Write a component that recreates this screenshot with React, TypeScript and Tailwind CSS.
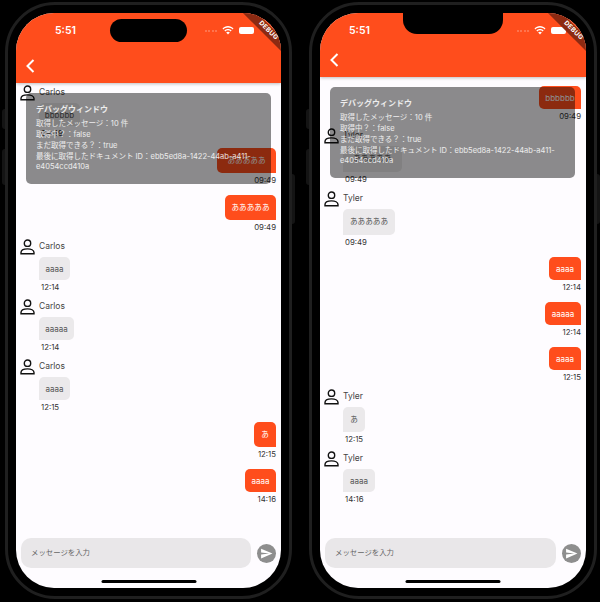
const fontCls = "font-['Inter','Noto_Sans_CJK_JP',sans-serif]"

type Msg = { side: 'me' | 'them'; text: string; time: string; w: string; h?: string; name?: string }

const leftMsgs: Msg[] = [
  { side: 'them', name: 'Carlos', text: 'bbbbbb', time: '09:49', w: 'w-[41px]' },
  { side: 'me', text: 'あああああ', time: '09:49', w: 'w-[59px]', h: 'h-[25px]' },
  { side: 'me', text: 'あああああ', time: '09:49', w: 'w-[51px]', h: 'h-[25px]' },
  { side: 'them', name: 'Carlos', text: 'aaaa', time: '12:14', w: 'w-[31px]' },
  { side: 'them', name: 'Carlos', text: 'aaaaa', time: '12:14', w: 'w-[35px]' },
  { side: 'them', name: 'Carlos', text: 'aaaa', time: '12:15', w: 'w-[31px]' },
  { side: 'me', text: 'あ', time: '12:15', w: 'w-[22px]', h: 'h-[25px]' },
  { side: 'me', text: 'aaaa', time: '14:16', w: 'w-[31px]' },
]

const rightMsgs: Msg[] = [
  { side: 'me', text: 'bbbbbb', time: '09:49', w: 'w-[42px]' },
  { side: 'them', name: 'Tyler', text: 'あああああ', time: '09:49', w: 'w-[59px]', h: 'h-[26px]' },
  { side: 'them', name: 'Tyler', text: 'あああああ', time: '09:49', w: 'w-[52px]', h: 'h-[26px]' },
  { side: 'me', text: 'aaaa', time: '12:14', w: 'w-[32px]' },
  { side: 'me', text: 'aaaaa', time: '12:14', w: 'w-[36px]' },
  { side: 'me', text: 'aaaa', time: '12:15', w: 'w-[32px]' },
  { side: 'them', name: 'Tyler', text: 'あ', time: '12:15', w: 'w-[22px]', h: 'h-[25px]' },
  { side: 'them', name: 'Tyler', text: 'aaaa', time: '14:16', w: 'w-[32px]' },
]

const PersonIcon = () => (
  <svg width="15" height="16" viewBox="0 0 15 16" fill="none" stroke="#111" strokeWidth="1.4" className="shrink-0">
    <circle cx="7.5" cy="4.2" r="3.2" />
    <path d="M1 14.8v-1.3c0-2.2 2.900-3.600 6.500-3.600s6.500 1.400 6.500 3.600v1.300z" />
  </svg>
)

// japanese text sits a little smaller than latin in the bubbles
const bubbleText = (text: string) => (/[a-z]/.test(text) ? 'text-[8px]' : 'text-[7.6px]')

const Bubble = ({ msg }: { msg: Msg }) => {
  if (msg.side === 'me') {
    return (
      <div className="mt-2 flex flex-col items-end first:mt-[9px]">
        <div className={`${msg.w} ${msg.h ?? 'h-[23px]'} ${bubbleText(msg.text)} flex items-center justify-center rounded-t-[5px] rounded-bl-[5px] bg-[#ff4d1c] text-white`}>
          {msg.text}
        </div>
        <div className="h-[14px] text-[7.8px] leading-[14px] text-[#333]">{msg.time}</div>
      </div>
    )
  }
  return (
    <div className="mt-[5px] flex flex-col first:mt-[2px]">
      <div className="flex h-[18px] items-start gap-[4px]">
        <PersonIcon />
        <span className="mt-[2px] text-[8.5px] leading-[11px] text-[#444]">{msg.name}</span>
      </div>
      <div className={`ml-[19px] ${msg.w} ${msg.h ?? 'h-[23px]'} ${bubbleText(msg.text)} flex items-center justify-center rounded-t-[5px] rounded-br-[5px] bg-[#ebe9eb] text-[#555]`}>
        {msg.text}
      </div>
      <div className="ml-[21px] h-[14px] text-[7.8px] leading-[14px] text-[#333]">{msg.time}</div>
    </div>
  )
}

const StatusRight = () => (
  <div className="flex items-center gap-[5px]">
    <div className="flex gap-[1.5px]">
      <span className="size-[2px] rounded-full bg-white/30" />
      <span className="size-[2px] rounded-full bg-white/30" />
      <span className="size-[2px] rounded-full bg-white/30" />
      <span className="size-[2px] rounded-full bg-white/30" />
    </div>
    <svg width="12" height="9" viewBox="0 0 12 9" fill="white">
      <path d="M6 1.600c1.800 0 3.400.7 4.600 1.800l.9-1C10.100.9 8.100 0 6 0S1.900.9.500 2.400l.9 1C2.600 2.300 4.200 1.600 6 1.600z" />
      <path d="M6 4.300c1 0 2 .4 2.700 1.100l.9-1C8.700 3.400 7.400 2.900 6 2.900s-2.700.5-3.600 1.500l.9 1C4 4.700 5 4.300 6 4.300z" />
      <path d="M6 5.700c-.7 0-1.300.3-1.800.7L6 8.500l1.800-2.100C7.300 6 6.700 5.700 6 5.700z" />
    </svg>
    <div className="h-[7px] w-[15px] rounded-[2px] bg-white" />
  </div>
)

const Phone = ({ msgs, notch, sizeCls, headerCls, statusCls, debugCls }: {
  msgs: Msg[]
  notch: 'island' | 'notch'
  sizeCls: string
  headerCls: string
  statusCls: string
  debugCls: string
}) => (
  <div className={`relative rounded-[50px] border-[3px] border-[#1f1f1f] bg-black p-[8px] ${sizeCls}`}>
    <div className="absolute -left-[6px] top-[104px] h-[20px] w-[3px] rounded-l bg-[#141414]" />
    <div className="absolute -left-[6px] top-[144px] h-[36px] w-[3px] rounded-l bg-[#141414]" />
    <div className="absolute -right-[6px] top-[169px] h-[50px] w-[3px] rounded-r bg-[#141414]" />
    <div className="relative flex h-full flex-col overflow-hidden rounded-[38px] bg-[#fefcff]">
      <header className={`${headerCls} flex shrink-0 flex-col bg-[#ff4d1c] shadow-[0_1px_3px_rgba(0,0,0,0.25)]`}>
        <div className={`flex h-[33px] items-center justify-between pt-[2px] ${statusCls}`}>
          <span className="text-[10.5px] font-semibold text-white">5:51</span>
          <StatusRight />
        </div>
        <div className="mt-auto pb-[9px] pl-[8px]">
          <svg width="12" height="16" viewBox="0 0 12 16" fill="none" stroke="white" strokeWidth="2">
            <path d="M9.500 2 3.500 8l6 6" />
          </svg>
        </div>
      </header>

      <main className="flex-1 pl-[4px] pr-[5px]">
        {msgs.map((m, i) => <Bubble key={i} msg={m} />)}
      </main>

      <div className="flex shrink-0 items-center gap-[6px] pb-[20px] pl-[5px] pr-[5px]">
        <div className="flex h-[30px] flex-1 items-center rounded-[10px] bg-[#e9e7e9] pl-[10px] text-[7.4px] text-[#666]">
          メッセージを入力
        </div>
        <div className="flex size-[19px] items-center justify-center rounded-full bg-[#8e8e8e]">
          <svg width="13" height="13" viewBox="0 0 24 24" fill="white">
            <path d="M2.010 21 23 12 2.010 3 2 10l15 2-15 2z" />
          </svg>
        </div>
      </div>

      {notch === 'island'
        ? <div className="absolute left-[94px] top-[6px] h-[23px] w-[77px] rounded-full bg-black" />
        : <div className="absolute left-[83px] top-0 h-[21px] w-[100px] rounded-b-[14px] bg-black" />}

      <div className={`absolute ${debugCls} h-[91px] w-[245px] rounded-[5px] bg-black/45 px-[10px] pt-[10px] text-[7.5px] text-white/85`}>
        <div className="mb-[2px] text-[8px] font-bold leading-[13px]">デバッグウィンドウ</div>
        <p className="leading-[11.200px]">取得したメッセージ：10 件</p>
        <p className="leading-[11.200px]">取得中？：false</p>
        <p className="leading-[11.200px]">まだ取得できる？：true</p>
        <p className="leading-[10.500px]">最後に取得したドキュメント ID：ebb5ed8a-1422-44ab-a411-<br />e4054ccd410a</p>
      </div>

      <div className="absolute -right-[22px] top-[13px] flex h-[10px] w-[70px] rotate-45 items-center justify-center bg-[#8c2a12] text-[6.5px] font-bold tracking-[0.3px] text-white">
        DEBUG
      </div>

      <div className="absolute bottom-[5px] left-1/2 h-[3px] w-[95px] -translate-x-1/2 rounded-full bg-black" />
    </div>
  </div>
)

export default function App() {
  return (
    <div className={`flex h-[602px] w-[600px] gap-[17px] overflow-hidden bg-black pl-[5px] pt-[2px] ${fontCls}`}>
      <Phone
        msgs={leftMsgs}
        notch="island"
        sizeCls="h-[597px] w-[287px]"
        headerCls="h-[70px]"
        statusCls="pl-[39px] pr-[27px]"
        debugCls="left-[10px] top-[80px]"
      />
      <Phone
        msgs={rightMsgs}
        notch="notch"
        sizeCls="h-[597px] w-[288px]"
        headerCls="h-[64px]"
        statusCls="pl-[29px] pr-[20px]"
        debugCls="left-[10px] top-[74px]"
      />
    </div>
  )
}
